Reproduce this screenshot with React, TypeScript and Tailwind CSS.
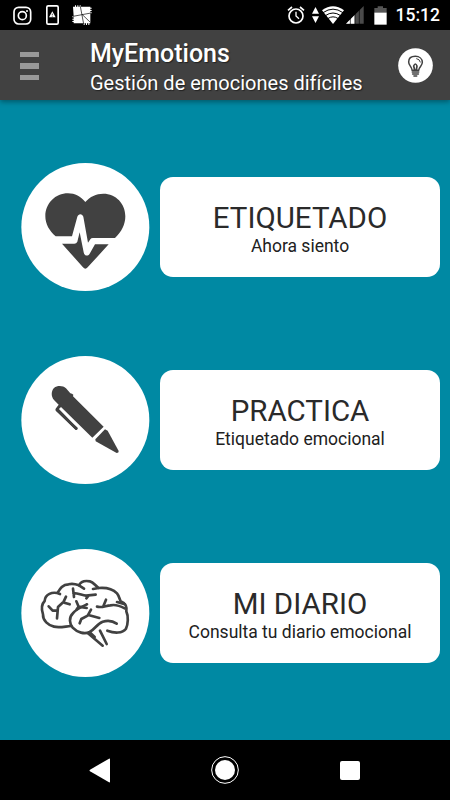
import type { ReactNode } from 'react'

interface MenuRowProps {
  title: string
  subtitle: string
  icon: ReactNode
}

function HeartIcon() {
  return (
    <svg viewBox="0 6 420 420" className="h-[140px] w-[140px] shrink-0">
      <circle cx="211" cy="216" r="192" fill="#fff" />
      <path
        d="M211 141C197 125 180 115 159 115C121 115 91 145 91 184C91 207 103 228 122 244H171L187 185C190 175 202 175 205 185L219 263L226 253Q228 249 234 249H300C320 231 331 207 331 184C331 146 303 116 265 116C243 116 225 125 211 141Z"
        fill="#414141"
      />
      <path
        d="M141 266H178Q184 266 187 260L194 232L206 292C208 304 220 304 224 296L240 268H281L218 337Q211 345 204 337Z"
        fill="#414141"
      />
    </svg>
  )
}

function PenIcon() {
  return (
    <svg viewBox="0 0 420 420" className="h-[140px] w-[140px] shrink-0">
      <circle cx="211" cy="210" r="192" fill="#fff" />
      <g fill="#414141">
        <path d="M117 150C107 138 109 122 117 114C128 105 144 107 153 115L166 130L171 131L175 134L174 139L266 230L232 263L138 171L128 181L188 233Q189 240 182 240L122 182Q120 178 123 175L131 164Z" />
        <path d="M270 238L278 242L311 303Q312 309 305 309L242 274L241 268Z" />
      </g>
      <path d="M138 177L181 221" stroke="#fff" strokeWidth="5" />
      <path d="M129 180L183 235" stroke="#414141" strokeWidth="8" strokeLinecap="round" />
    </svg>
  )
}

function BrainIcon() {
  return (
    <svg viewBox="0 0 420 420" className="h-[140px] w-[140px] shrink-0">
      <circle cx="211" cy="210" r="192" fill="#fff" />
      <g fill="none" stroke="#414141" strokeWidth="8" strokeLinecap="round" strokeLinejoin="round">
        {/* outer outline */}
        <path d="M135 153C111 143 90 155 89 174C77 186 80 202 84 214C83 233 100 247 117 251C134 255 151 250 168 249" />
        <path d="M128 149C135 137 143 124 161 124C171 121 184 124 192 127C198 113 214 113 225 115C236 117 240 128 251 135C273 133 294 139 306 151C312 158 313 167 317 175C333 180 336 194 334 205C341 220 339 244 333 257C322 272 298 271 277 263" />
        {/* lower lobe and stem */}
        <path d="M216 184C198 192 183 198 174 211C160 224 164 243 173 254C187 269 209 274 224 267C240 258 247 242 263 236C280 231 294 234 305 242" />
        <path d="M219 271L263 308M255 263L275 303M224 268L239 282" />
        {/* folds */}
        <path d="M174 137L177 162M175 150C191 151 200 156 213 158L242 155M220 159L214 166" />
        <path d="M153 161L146 176L129 192L126 226M148 179L164 184M127 203L113 203L101 190" />
        <path d="M184 175L191 191L215 195M191 191L185 199" />
        <path d="M228 200L218 218L199 228L194 241M220 216L253 225" />
        <path d="M192 127L207 137M251 135L234 138" />
        <path d="M246 191C262 195 272 188 286 187C303 183 316 189 329 196M273 170L265 190M306 177L330 184" />
      </g>
    </svg>
  )
}

function BulbIcon() {
  return (
    <svg viewBox="0 0 105 105" className="h-[35px] w-[35px]">
      <circle cx="52.5" cy="52.5" r="52" fill="#fff" />
      <g fill="none" stroke="#414141" strokeWidth="4.500" strokeLinecap="round" strokeLinejoin="round">
        <path d="M42 67C42 56 32 53 32 42C32 30 41 25 52 25C64 25 73 32 73 43C73 54 63 56 62 67Z" />
        <path d="M56 32Q65 33 67 42" strokeWidth="3" />
        <path d="M50 66L47 54Q52 42 57 54L55 66" strokeWidth="5" />
        <path d="M43 72H62M44 78H61M48 84H56" strokeWidth="5" />
      </g>
    </svg>
  )
}

function StatusBar() {
  return (
    <div className="flex h-[30px] items-center bg-black pl-[13px] pr-[10px] text-white">
      <svg viewBox="0 0 57 57" className="h-[19px] w-[19px]" fill="none" stroke="#fff" strokeWidth="5">
        <rect x="3" y="4" width="50" height="50" rx="14" />
        <circle cx="28" cy="29" r="12" />
        <circle cx="42" cy="15" r="3" fill="#fff" stroke="none" />
      </svg>
      <svg viewBox="0 0 39 60" className="ml-[14px] h-[20px] w-[13px]">
        <rect x="2.500" y="2.500" width="34" height="55" rx="4" fill="none" stroke="#fff" strokeWidth="5" />
        <path d="M19 19L29 37H9Z" fill="#fff" />
        <path d="M19 26V31M19 33V35" stroke="#000" strokeWidth="2" />
      </svg>
      <svg viewBox="0 0 60 60" className="ml-[13px] h-[20px] w-[20px]">
        <path d="M3 5H9V1H12V5H16V1H19V5H23V1H26V5H55V8H59V11H55V15H59V18H55V22H59V25H55V55H52V60H49V55H45V60H42V55H38V60H35V55H5V51H1V48H5V44H1V41H5V37H1V34H5Z" fill="#fff" />
        <path d="M25 4L35 57M3 34L57 24M30 28L55 52" stroke="#000" strokeWidth="2" />
      </svg>

      <svg viewBox="0 0 54 54" className="ml-auto h-[18px] w-[18px]" fill="none" stroke="#fff" strokeWidth="5">
        <circle cx="27" cy="30" r="21" />
        <path d="M27 17V30L36 38" strokeWidth="4" />
        <path d="M3 13L15 3M39 3L51 13" />
      </svg>
      <svg viewBox="0 0 21 48" className="ml-[7px] h-[16px] w-[7px]" fill="#fff">
        <path d="M10.500 0L21 20H0ZM10.500 48L21 28H0Z" />
      </svg>
      <svg viewBox="0 0 66 54" className="ml-[3px] h-[18px] w-[22px]">
        <path d="M0 13Q33 -11 66 13L33 54Z" fill="#fff" />
        <path d="M3 20Q33 -1 63 20M10 29Q33 13 56 29M17 38Q33 27 49 38" fill="none" stroke="#000" strokeWidth="3" />
      </svg>
      <svg viewBox="0 0 54 54" className="ml-[2px] h-[18px] w-[18px]">
        <path d="M0 53L53 0V53Z" fill="#4a4a4a" />
        <path d="M0 53L26 27V53Z" fill="#fff" />
        <path d="M13 36V54M27 22V54M40 10V54" stroke="#000" strokeWidth="2" />
      </svg>
      <svg viewBox="0 0 39 57" className="ml-[10px] h-[19px] w-[13px]">
        <path d="M11 1H27V6H38V21H1V6H11Z" fill="#555" />
        <path d="M1 20H38V56H1Z" fill="#fff" />
      </svg>
      <span className="ml-[9px] text-[17.500px] leading-[30px] font-medium">15:12</span>
    </div>
  )
}

function Header() {
  return (
    <header className="relative flex h-[70px] items-center bg-[#414141] pr-[17px] pl-[20px] text-white shadow-[0_2px_5px_rgba(0,0,0,0.35)]">
      <div className="flex w-[19px] flex-col gap-[6px] pt-[2px]">
        <div className="h-[5px] bg-[#999]" />
        <div className="h-[6px] bg-[#999]" />
        <div className="h-[5px] bg-[#999]" />
      </div>
      <div className="ml-[51px] pt-[7px] [text-shadow:1px_1px_1px_#222]">
        <h1 className="text-[25px] leading-[30px] font-medium">MyEmotions</h1>
        <p className="text-[20px] leading-[29px]">Gestión de emociones difíciles</p>
      </div>
      <div className="ml-auto">
        <BulbIcon />
      </div>
    </header>
  )
}

function MenuRow({ title, subtitle, icon }: MenuRowProps) {
  return (
    <div className="flex h-[140px] items-center pr-[10px] pl-[15px]">
      {icon}
      <button className="ml-[5px] flex h-[100px] flex-1 flex-col items-center rounded-[13px] bg-white pt-[23px] text-[#2a2a2a]">
        <span className="text-[29.500px] leading-[36px]">{title}</span>
        <span className="text-[17.500px] leading-[20px] text-[#212121]">{subtitle}</span>
      </button>
    </div>
  )
}

function NavBar() {
  return (
    <nav className="flex h-[60px] items-center justify-between bg-black pr-[90px] pl-[89px]">
      <svg viewBox="0 0 63 75" className="h-[25px] w-[21px]">
        <path d="M3 35L60 2Q63 1 63 4V71Q63 74 60 73L3 40Q0 38 3 35Z" fill="#fff" />
      </svg>
      <svg viewBox="0 0 84 84" className="h-[28px] w-[28px]">
        <circle cx="42" cy="42" r="30" fill="#fff" />
        <circle cx="42" cy="42" r="40" fill="none" stroke="#fff" strokeWidth="3" />
      </svg>
      <div className="h-[19px] w-[20px] rounded-[2px] bg-white" />
    </nav>
  )
}

export default function App() {
  return (
    <div className="flex h-[800px] w-[450px] flex-col overflow-hidden bg-[#0089a3] font-[Roboto,sans-serif]">
      <StatusBar />
      <Header />
      <main className="flex flex-1 flex-col gap-[53px] pt-[57px]">
        <MenuRow title="ETIQUETADO" subtitle="Ahora siento" icon={<HeartIcon />} />
        <MenuRow title="PRACTICA" subtitle="Etiquetado emocional" icon={<PenIcon />} />
        <MenuRow title="MI DIARIO" subtitle="Consulta tu diario emocional" icon={<BrainIcon />} />
      </main>
      <NavBar />
    </div>
  )
}
